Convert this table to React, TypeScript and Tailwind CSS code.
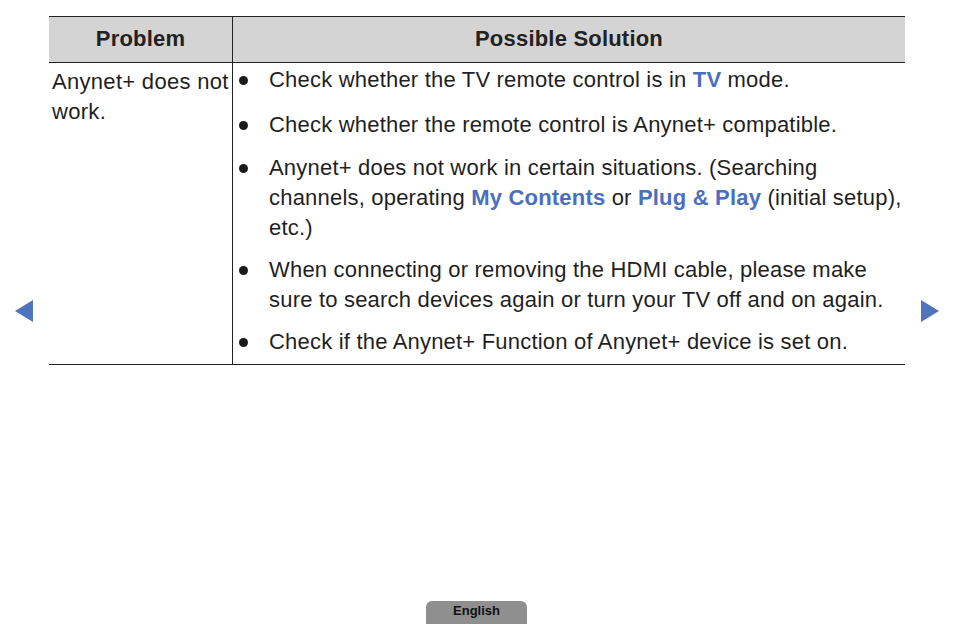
import React from 'react';

const blue = 'text-[#4a6fbd]';

const Bullet = ({ children, className = '' }: { children: React.ReactNode; className?: string }) => (
  <li className={`flex ${className}`}>
    <span className="w-[36px] shrink-0 flex justify-start pl-[6px] pt-[11px]">
      <span className="block w-[9px] h-[9px] rounded-full bg-[#1a1a1a]" />
    </span>
    <span className="flex-1">{children}</span>
  </li>
);

export default function App() {
  return (
    <div
      className="relative w-[954px] h-[624px] bg-white text-[#1f1f1f] flex flex-col overflow-hidden"
      style={{ fontFamily: '"Liberation Sans", Arial, sans-serif' }}
    >
      {/* table */}
      <div className="ml-[49px] mt-[16px] w-[856px] border-t border-b border-[#222]">
        <div className="flex h-[46px] bg-[#d4d4d4] border-b border-[#222] text-[22px] font-semibold text-[#222] tracking-[0.2px]">
          <div className="w-[184px] flex items-center justify-center border-r border-[#222] pb-[2px]">Problem</div>
          <div className="flex-1 flex items-center justify-center pb-[2px]">Possible Solution</div>
        </div>
        <div className="flex text-[22px] leading-[30px] tracking-[0.2px]">
          <div className="w-[184px] border-r border-[#222] pl-[3px] pt-[4px] tracking-[0.3px]">
            Anynet+ does not work.
          </div>
          <ul className="flex-1 pt-[2px] pb-[7px]">
            <Bullet>
              Check whether the TV remote control is in <span className={`${blue} font-bold`}>TV</span> mode.
            </Bullet>
            <Bullet className="mt-[15px]">Check whether the remote control is Anynet+ compatible.</Bullet>
            <Bullet className="mt-[13px]">
              Anynet+ does not work in certain situations. (Searching channels, operating{' '}
              <span className={`${blue} font-bold`}>My Contents</span> or{' '}
              <span className={`${blue} font-bold`}>Plug &amp; Play</span> (initial setup), etc.)
            </Bullet>
            <Bullet className="mt-[12px]">
              When connecting or removing the HDMI cable, please make sure to search devices again or turn your TV off and on again.
            </Bullet>
            <Bullet className="mt-[12px]">Check if the Anynet+ Function of Anynet+ device is set on.</Bullet>
          </ul>
        </div>
      </div>

      {/* nav arrows */}
      <svg className="absolute left-[15px] top-[300px]" width="19" height="22" viewBox="0 0 19 22">
        <polygon points="0,11 18,0 18,22" fill="#4f73bd" />
      </svg>
      <svg className="absolute left-[921px] top-[300px]" width="19" height="22" viewBox="0 0 19 22">
        <polygon points="18,11 0,0 0,22" fill="#4f73bd" />
      </svg>

      {/* language tab */}
      <div className="mt-auto ml-[426px] w-[101px] h-[23px] rounded-t-[6px] bg-[#8f8f8f] flex justify-center text-[13px] font-semibold text-[#111]">
        English
      </div>
    </div>
  );
}
